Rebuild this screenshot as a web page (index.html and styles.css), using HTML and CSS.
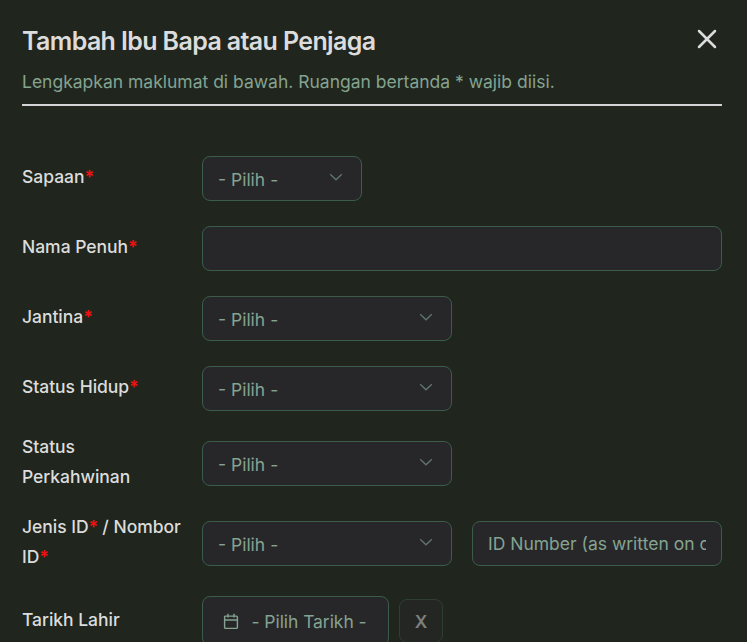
FILE: index.html
```html
<!DOCTYPE html>
<html lang="ms">
<head>
<meta charset="utf-8">
<title>Tambah Ibu Bapa atau Penjaga</title>
<link rel="stylesheet" href="styles.css">
</head>
<body>
<main class="dialog">
  <header class="header">
    <div class="title-row">
      <h1 class="title">Tambah Ibu Bapa atau Penjaga</h1>
      <button class="close" aria-label="Tutup"><svg width="20" height="20" viewBox="0 0 20 20"><path d="M2 2L18 18M18 2L2 18"/></svg></button>
    </div>
    <p class="subtitle">Lengkapkan maklumat di bawah. Ruangan bertanda * wajib diisi.</p>
  </header>
  <form class="form">
    <div class="row">
      <label class="label">Sapaan<span class="req">*</span></label>
      <div class="select select-sm"><span>- Pilih -</span><svg class="chevron" viewBox="0 0 14 8"><path d="M1.2 1.2L7 6.8L12.8 1.2"/></svg></div>
    </div>
    <div class="row">
      <label class="label">Nama Penuh<span class="req">*</span></label>
      <input class="input input-full" type="text">
    </div>
    <div class="row">
      <label class="label">Jantina<span class="req">*</span></label>
      <div class="select"><span>- Pilih -</span><svg class="chevron" viewBox="0 0 14 8"><path d="M1.2 1.2L7 6.8L12.8 1.2"/></svg></div>
    </div>
    <div class="row">
      <label class="label">Status Hidup<span class="req">*</span></label>
      <div class="select"><span>- Pilih -</span><svg class="chevron" viewBox="0 0 14 8"><path d="M1.2 1.2L7 6.8L12.8 1.2"/></svg></div>
    </div>
    <div class="row row-tall">
      <label class="label">Status Perkahwinan</label>
      <div class="select"><span>- Pilih -</span><svg class="chevron" viewBox="0 0 14 8"><path d="M1.2 1.2L7 6.8L12.8 1.2"/></svg></div>
    </div>
    <div class="row row-tall">
      <label class="label">Jenis ID<span class="req">*</span> / Nombor ID<span class="req">*</span></label>
      <div class="select"><span>- Pilih -</span><svg class="chevron" viewBox="0 0 14 8"><path d="M1.2 1.2L7 6.8L12.8 1.2"/></svg></div>
      <input class="input input-id" type="text" placeholder="ID Number (as written on card)">
    </div>
    <div class="row row-date">
      <label class="label">Tarikh Lahir</label>
      <div class="date"><svg class="calendar" viewBox="0 0 16 17"><path d="M2.6 3.1H13.4Q14.4 3.1 14.4 4.1V14.4Q14.4 15.4 13.4 15.4H2.6Q1.6 15.4 1.6 14.4V4.1Q1.6 3.1 2.6 3.1ZM1.6 7H14.4M5 .8V4.5M11 .8V4.5"/></svg><span>- Pilih Tarikh -</span></div>
      <button class="clear" type="button" disabled>X</button>
    </div>
  </form>
</main>
</body>
</html>
```
FILE: styles.css
```css
* { box-sizing: border-box; }
body {
  margin: 0;
  height: 642px;
  overflow: hidden;
  background: #20261d;
  color: #dcdcdc;
  font-family: Inter, "Liberation Sans", sans-serif;
  font-size: 17.5px;
}
.dialog { padding: 22px 25px 0 22px; }
.header { height: 84px; border-bottom: 2px solid #d4d4d8; }
.title-row { display: flex; justify-content: space-between; align-items: flex-start; height: 38px; }
.title { margin: 0; font-size: 25px; font-weight: 600; letter-spacing: -0.625px; line-height: 38px; }
.close { padding: 0; border: 0; background: none; width: 30px; height: 34px; display: flex; align-items: center; justify-content: center; }
.close svg { display: block; fill: none; stroke: #dcdcdc; stroke-width: 2.5; stroke-linecap: round; }
.subtitle { margin: 7px 0 0; color: #84a391; line-height: 30px; }
.form { padding-top: 50px; }
.row { display: flex; align-items: flex-start; height: 70px; }
.label { width: 160px; margin: 6px 20px 0 0; line-height: 30px; font-weight: 500; letter-spacing: -0.03px; flex: none; }
.req { color: #ee1111; font-weight: 700; letter-spacing: -0.6px; }
.select, .input, .date {
  height: 45px;
  border: 1px solid #3b5c4a;
  border-radius: 8px;
  background: #27272a;
  color: #84a391;
}
.select { width: 250px; padding: 2px 18px 0 15px; display: flex; align-items: center; justify-content: space-between; flex: none; }
.select-sm { width: 160px; }
.chevron { width: 14px; height: 8px; margin-top: -6px; fill: none; stroke: #60766c; stroke-width: 1.3; }
.input { font: inherit; padding: 0 15px; outline: 0; }
.input::placeholder { color: #84a391; opacity: 1; }
.input-full { width: 520px; }
.input-id { width: 250px; margin-left: 20px; }
.row-tall { height: 80px; }
.row:nth-child(4) { height: 65px; }
.row-tall .label { margin-top: 1px; }
.row-tall .select, .row-tall .input { margin-top: 10px; }
.row-tall:nth-child(6) { height: 85px; }
.row-date .label { margin-top: 9px; }
.date { width: 187px; height: 50px; display: flex; align-items: center; padding: 0 20px; gap: 12.5px; white-space: nowrap; letter-spacing: -0.06px; }
.calendar { width: 16px; height: 17px; flex: none; fill: none; stroke: #84a391; stroke-width: 1.4; }
.clear { width: 44px; height: 44px; margin: 3px 0 0 10px; padding: 0; border: 1px solid #2d3e32; border-radius: 8px; background: #242624; color: #7d807c; font: 600 17.5px Inter, sans-serif; }
```
